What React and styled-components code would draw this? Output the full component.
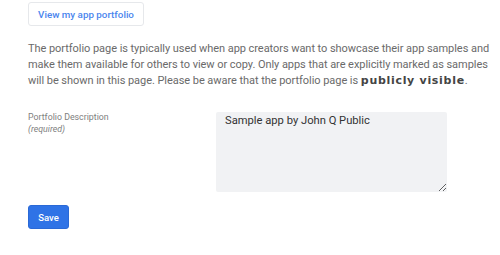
import styled, { createGlobalStyle } from "styled-components";

const GlobalStyle = createGlobalStyle`
  html, body {
    margin: 0;
    padding: 0;
    background: #ffffff;
    font-family: Roboto, "Liberation Sans", sans-serif;
  }
`;

const Page = styled.div`
  width: 500px;
  height: 255px;
  box-sizing: border-box;
  padding: 2px 8px 0 28px;
  display: flex;
  flex-direction: column;
  align-items: flex-start;
`;

const OutlineButton = styled.button`
  height: 24px;
  width: 116px;
  padding: 0;
  background: #ffffff;
  border: 1px solid #e6e8eb;
  border-radius: 3px;
  color: #4a85ee;
  font-family: Roboto, "Liberation Sans", sans-serif;
  font-size: 9.8px;
  font-weight: 500;
  cursor: pointer;
`;

const Intro = styled.p`
  margin: 15px 0 0;
  font-size: 11px;
  letter-spacing: -0.05px;
  line-height: 16px;
  color: #6a6a6a;
  width: 464px;

  strong {
    font-family: "DejaVu Sans", Roboto, sans-serif;
    font-size: 11px;
    letter-spacing: 0.7px;
    color: #444;
    font-weight: 700;
  }
`;

const FieldRow = styled.div`
  display: flex;
  margin-top: 23px;
  width: 100%;
`;

const LabelCol = styled.div`
  width: 188px;
  display: flex;
  flex-direction: column;
  gap: 1px;
`;

const Label = styled.span`
  font-size: 8.8px;
  color: #808080;
  line-height: 11px;
`;

const Hint = styled.span`
  font-size: 8.8px;
  font-style: italic;
  color: #808080;
  line-height: 11px;
`;

const TextArea = styled.textarea`
  width: 231px;
  height: 80px;
  box-sizing: border-box;
  background: #f1f2f4;
  border: none;
  border-radius: 2px;
  padding: 2px 9px;
  font-family: Roboto, "Liberation Sans", sans-serif;
  font-size: 11.2px;
  color: #333;
  resize: both;
  outline: none;
`;

const SaveButton = styled.button`
  margin-top: 13px;
  width: 41px;
  height: 24px;
  padding: 0;
  background: #2f73e6;
  border: 1px solid #2a69d6;
  border-radius: 3px;
  color: #ffffff;
  font-family: Roboto, "Liberation Sans", sans-serif;
  font-size: 9.5px;
  font-weight: 500;
  cursor: pointer;
`;

export default function App() {
  return (
    <>
      <GlobalStyle />
      <Page>
        <OutlineButton>View my app portfolio</OutlineButton>
        <Intro>
          The portfolio page is typically used when app creators want to
          showcase their app samples and make them available for others to
          view or copy. Only apps that are explicitly marked as samples will
          be shown in this page. Please be aware that the portfolio page is{" "}
          <strong>publicly visible</strong>.
        </Intro>
        <FieldRow>
          <LabelCol>
            <Label>Portfolio Description</Label>
            <Hint>(required)</Hint>
          </LabelCol>
          <TextArea defaultValue="Sample app by John Q Public" />
        </FieldRow>
        <SaveButton>Save</SaveButton>
      </Page>
    </>
  );
}
